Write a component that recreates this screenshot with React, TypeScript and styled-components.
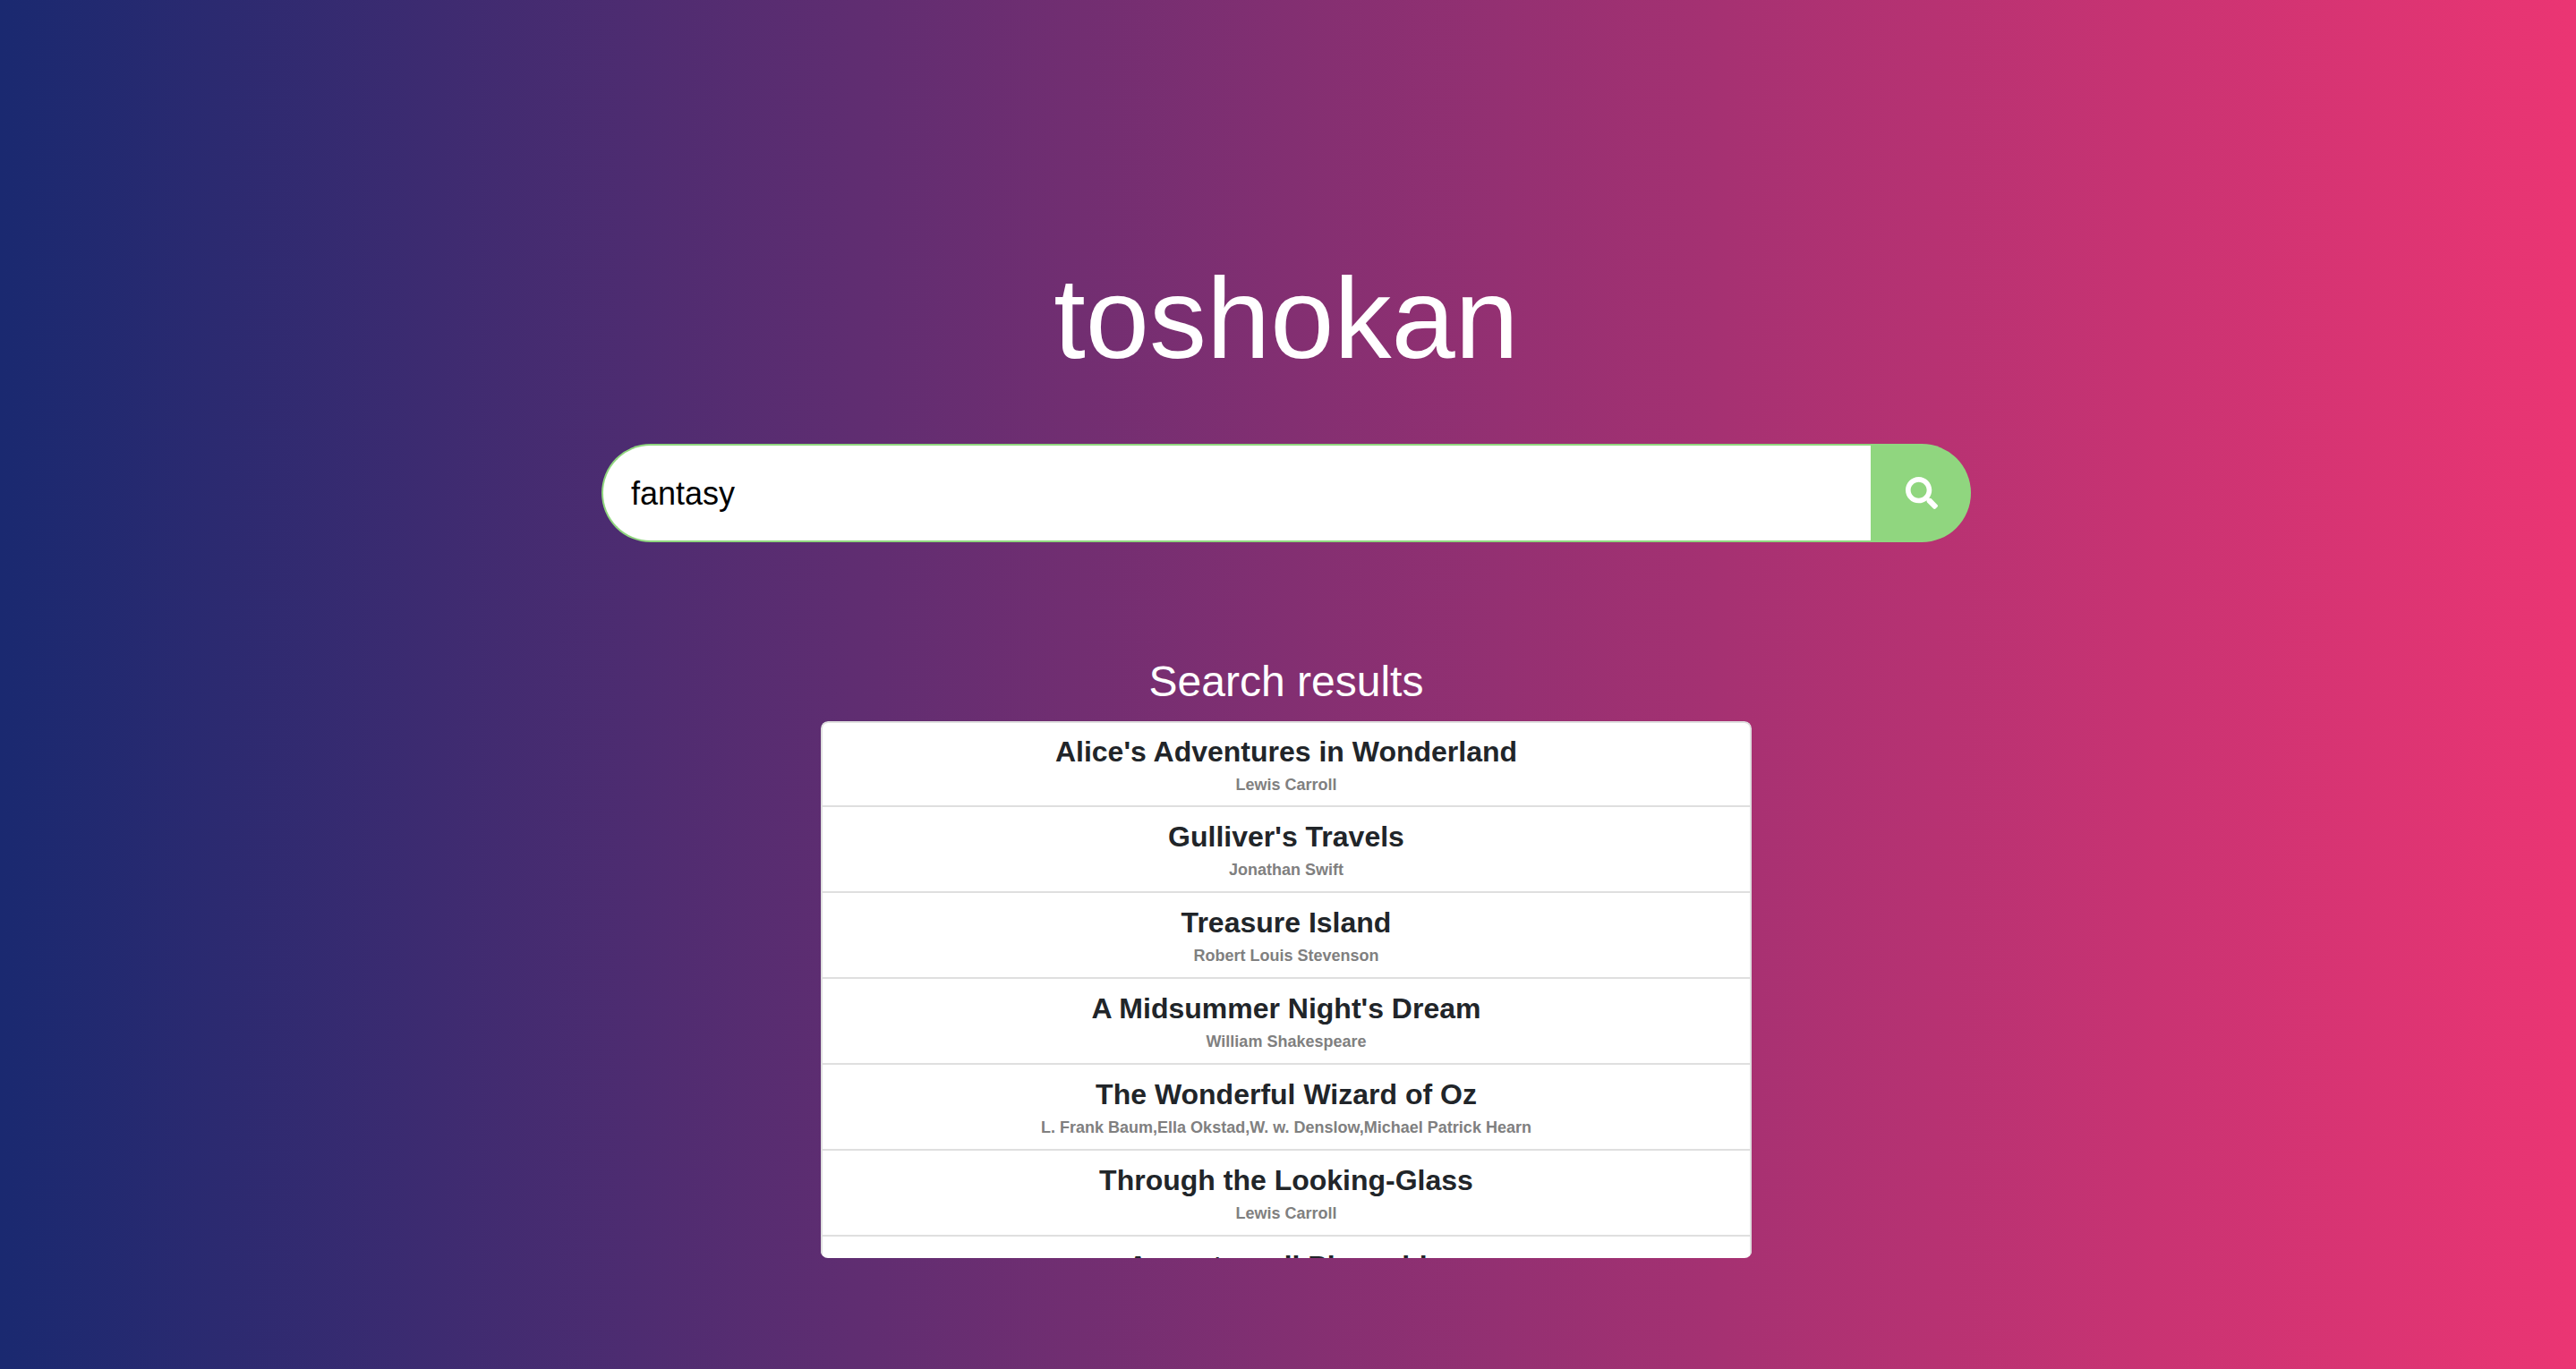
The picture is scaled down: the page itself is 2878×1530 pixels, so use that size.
import React, { useState } from "react";
import styled, { createGlobalStyle } from "styled-components";
import { FaSearch } from "react-icons/fa";

const GlobalStyle = createGlobalStyle`
  *, *::before, *::after { box-sizing: border-box; }
  body {
    margin: 0;
    font-family: "Liberation Sans", Arial, sans-serif;
    color: #212529;
  }
`;

const Page = styled.div`
  min-height: 100vh;
  display: flex;
  flex-direction: column;
  align-items: center;
  padding: 292px 4px 124px 0;
  background: linear-gradient(90deg, #1a2970 0%, #eb3573 100%);
`;

const Logo = styled.h1`
  margin: 0 0 76px;
  font-size: 128px;
  line-height: 128px;
  font-weight: 400;
  color: #fff;
`;

const SearchForm = styled.form`
  display: flex;
  width: 90%;
  max-width: 1530px;
  height: 110px;
  margin-bottom: 126px;
`;

const SearchInput = styled.input`
  flex: 1;
  min-width: 0;
  padding: 2px 31px 0;
  border: 2px solid #90d67f;
  border-right: 0;
  border-radius: 55px 0 0 55px;
  background: #fff;
  color: #000;
  font: 36px "Liberation Sans", Arial, sans-serif;
  outline: none;
`;

const SearchButton = styled.button`
  display: flex;
  align-items: center;
  justify-content: center;
  width: 112px;
  padding: 0 0 0 2px;
  border: 0;
  border-radius: 0 55px 55px 0;
  background: #90d67f;
  color: #fff;
  font-size: 36px;
  cursor: pointer;
`;

const Results = styled.section`
  width: 90%;
  max-width: 1040px;
  text-align: center;
`;

const ResultsHeading = styled.h2`
  margin: 0 0 14px;
  font-size: 48px;
  line-height: 60px;
  font-weight: 400;
  color: #fff;
`;

const ResultList = styled.ul`
  margin: 0;
  padding: 0;
  list-style: none;
  max-height: 600px;
  overflow-y: auto;
  scrollbar-width: none;
  border-radius: 8px;
`;

const ResultItem = styled.li`
  padding: 14px 24px 12px;
  border: 2px solid #dfdfdf;
  border-top-width: 0;
  background: #fff;

  &:first-child {
    padding: 13px 24px 11px;
    border-top-width: 2px;
    border-radius: 8px 8px 0 0;
  }
`;

const BookTitle = styled.h3`
  margin: 0 0 6px;
  font-size: 32px;
  line-height: 38px;
  font-weight: 700;
`;

const BookAuthor = styled.p`
  margin: 0;
  font-size: 18px;
  line-height: 24px;
  font-weight: 700;
  color: #808080;
`;

interface Book {
  title: string;
  authors: string[];
}

const books: Book[] = [
  { title: "Alice's Adventures in Wonderland", authors: ["Lewis Carroll"] },
  { title: "Gulliver's Travels", authors: ["Jonathan Swift"] },
  { title: "Treasure Island", authors: ["Robert Louis Stevenson"] },
  { title: "A Midsummer Night's Dream", authors: ["William Shakespeare"] },
  {
    title: "The Wonderful Wizard of Oz",
    authors: ["L. Frank Baum", "Ella Okstad", "W. w. Denslow", "Michael Patrick Hearn"],
  },
  { title: "Through the Looking-Glass", authors: ["Lewis Carroll"] },
  { title: "Avventure di Pinocchio", authors: ["Carlo Collodi"] },
];

export default function App() {
  const [query, setQuery] = useState("fantasy");

  return (
    <>
      <GlobalStyle />
      <Page>
        <Logo>toshokan</Logo>
        <SearchForm role="search" onSubmit={(e) => e.preventDefault()}>
          <SearchInput
            type="text"
            aria-label="Search books"
            value={query}
            onChange={(e) => setQuery(e.target.value)}
          />
          <SearchButton type="submit" aria-label="Search">
            <FaSearch />
          </SearchButton>
        </SearchForm>
        <Results>
          <ResultsHeading>Search results</ResultsHeading>
          <ResultList>
            {books.map((book) => (
              <ResultItem key={book.title}>
                <BookTitle>{book.title}</BookTitle>
                <BookAuthor>{book.authors.join(",")}</BookAuthor>
              </ResultItem>
            ))}
          </ResultList>
        </Results>
      </Page>
    </>
  );
}
